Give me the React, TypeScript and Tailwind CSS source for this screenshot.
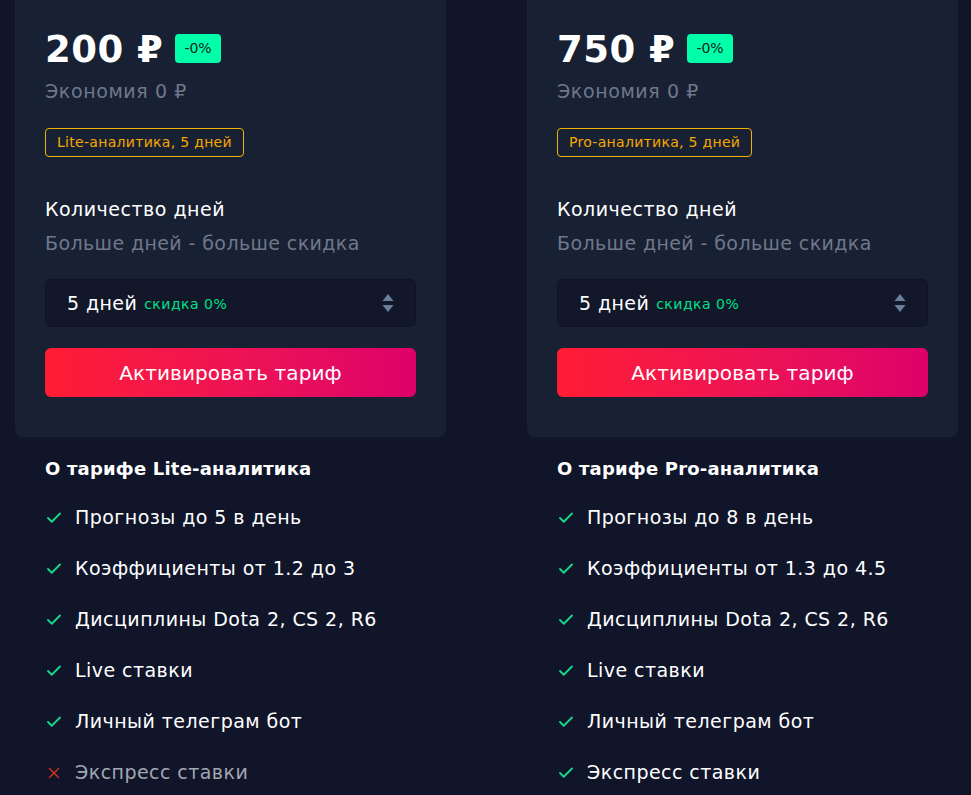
import { Check, X } from 'lucide-react';

type Plan = {
  price: string;
  tag: string;
  name: string;
  features: { text: string; ok: boolean }[];
};

const plans: Plan[] = [
  {
    price: '200 ₽',
    tag: 'Lite-аналитика, 5 дней',
    name: 'Lite-аналитика',
    features: [
      { text: 'Прогнозы до 5 в день', ok: true },
      { text: 'Коэффициенты от 1.2 до 3', ok: true },
      { text: 'Дисциплины Dota 2, CS 2, R6', ok: true },
      { text: 'Live ставки', ok: true },
      { text: 'Личный телеграм бот', ok: true },
      { text: 'Экспресс ставки', ok: false },
    ],
  },
  {
    price: '750 ₽',
    tag: 'Pro-аналитика, 5 дней',
    name: 'Pro-аналитика',
    features: [
      { text: 'Прогнозы до 8 в день', ok: true },
      { text: 'Коэффициенты от 1.3 до 4.5', ok: true },
      { text: 'Дисциплины Dota 2, CS 2, R6', ok: true },
      { text: 'Live ставки', ok: true },
      { text: 'Личный телеграм бот', ok: true },
      { text: 'Экспресс ставки', ok: true },
    ],
  },
];

const SortIcon = () => (
  <svg width="14" height="22" viewBox="0 0 14 22" fill="#6b7f9c">
    <path d="M7 2 L12.5 9 H1.5 Z" />
    <path d="M7 20 L12.5 13 H1.5 Z" />
  </svg>
);

const PlanColumn = ({ plan }: { plan: Plan }) => {
  return (
    <div className="w-[431px]">
      <div className="bg-[#182033] rounded-b-lg px-[30px] pt-[26px] pb-10">
        <div className="flex items-center gap-3">
          <span className="text-[37px] leading-[48px] font-semibold text-white tracking-[0.5px]">{plan.price}</span>
          <span className="bg-[#00ffa8] text-[#0d1a22] text-[14px] rounded-[4px] h-[29px] px-[9px] flex items-center mt-[-3px]">
            -0%
          </span>
        </div>
        <div className="text-[19px] leading-6 text-[#71778a] mt-[5px] tracking-[0.6px]">Экономия 0 ₽</div>
        <div className="mt-[25px]">
          <span className="inline-block border border-[#f2b000] text-[#f5a800] text-[14px] leading-[27px] rounded-[4px] px-[11px] tracking-[0.3px]">
            {plan.tag}
          </span>
        </div>
        <div className="text-[19px] leading-6 font-medium text-white mt-[40px] tracking-[0.5px]">Количество дней</div>
        <div className="text-[19px] leading-6 text-[#71778a] mt-[10px] tracking-[0.4px]">Больше дней - больше скидка</div>
        <div className="mt-[24px] h-[48px] rounded-md bg-[#121829] border border-[#0f1424] flex items-center pl-[21px] pr-[20px]">
          <span className="text-[19px] font-medium text-white tracking-[0.4px]">5 дней</span>
          <span className="text-[14px] text-[#00e08a] ml-[7px] mt-[2px] tracking-[0.5px]">скидка 0%</span>
          <span className="ml-auto flex">
            <SortIcon />
          </span>
        </div>
        <button className="mt-[21px] w-full h-[49px] rounded-md bg-gradient-to-r from-[#ff1c33] to-[#de006a] text-white text-[20px] font-medium tracking-[0.1px]">
          Активировать тариф
        </button>
      </div>
      <div className="px-[30px] pt-[20px]">
        <div className="text-[18px] leading-6 font-bold text-white tracking-[0.2px]">О тарифе {plan.name}</div>
        <ul className="mt-[11px] flex flex-col">
          {plan.features.map((f) => (
            <li key={f.text} className="flex items-center h-[51px]">
              <span className="w-[30px] flex">
                {f.ok ? (
                  <Check size={18} strokeWidth={2.4} className="text-[#19d98a]" />
                ) : (
                  <X size={18} strokeWidth={2} className="text-[#c5331b]" />
                )}
              </span>
              <span className={`text-[19px] tracking-[0.45px] ${f.ok ? 'text-white' : 'text-[#a3a7b1]'}`}>{f.text}</span>
            </li>
          ))}
        </ul>
      </div>
    </div>
  );
};

export default function App() {
  return (
    <div
      className="min-h-[795px] bg-[#10152a] flex gap-[81px] pl-[15px] overflow-hidden"
      style={{ fontFamily: '"DejaVu Sans", "Noto Sans", sans-serif' }}
    >
      {plans.map((p) => (
        <PlanColumn key={p.name} plan={p} />
      ))}
    </div>
  );
}
